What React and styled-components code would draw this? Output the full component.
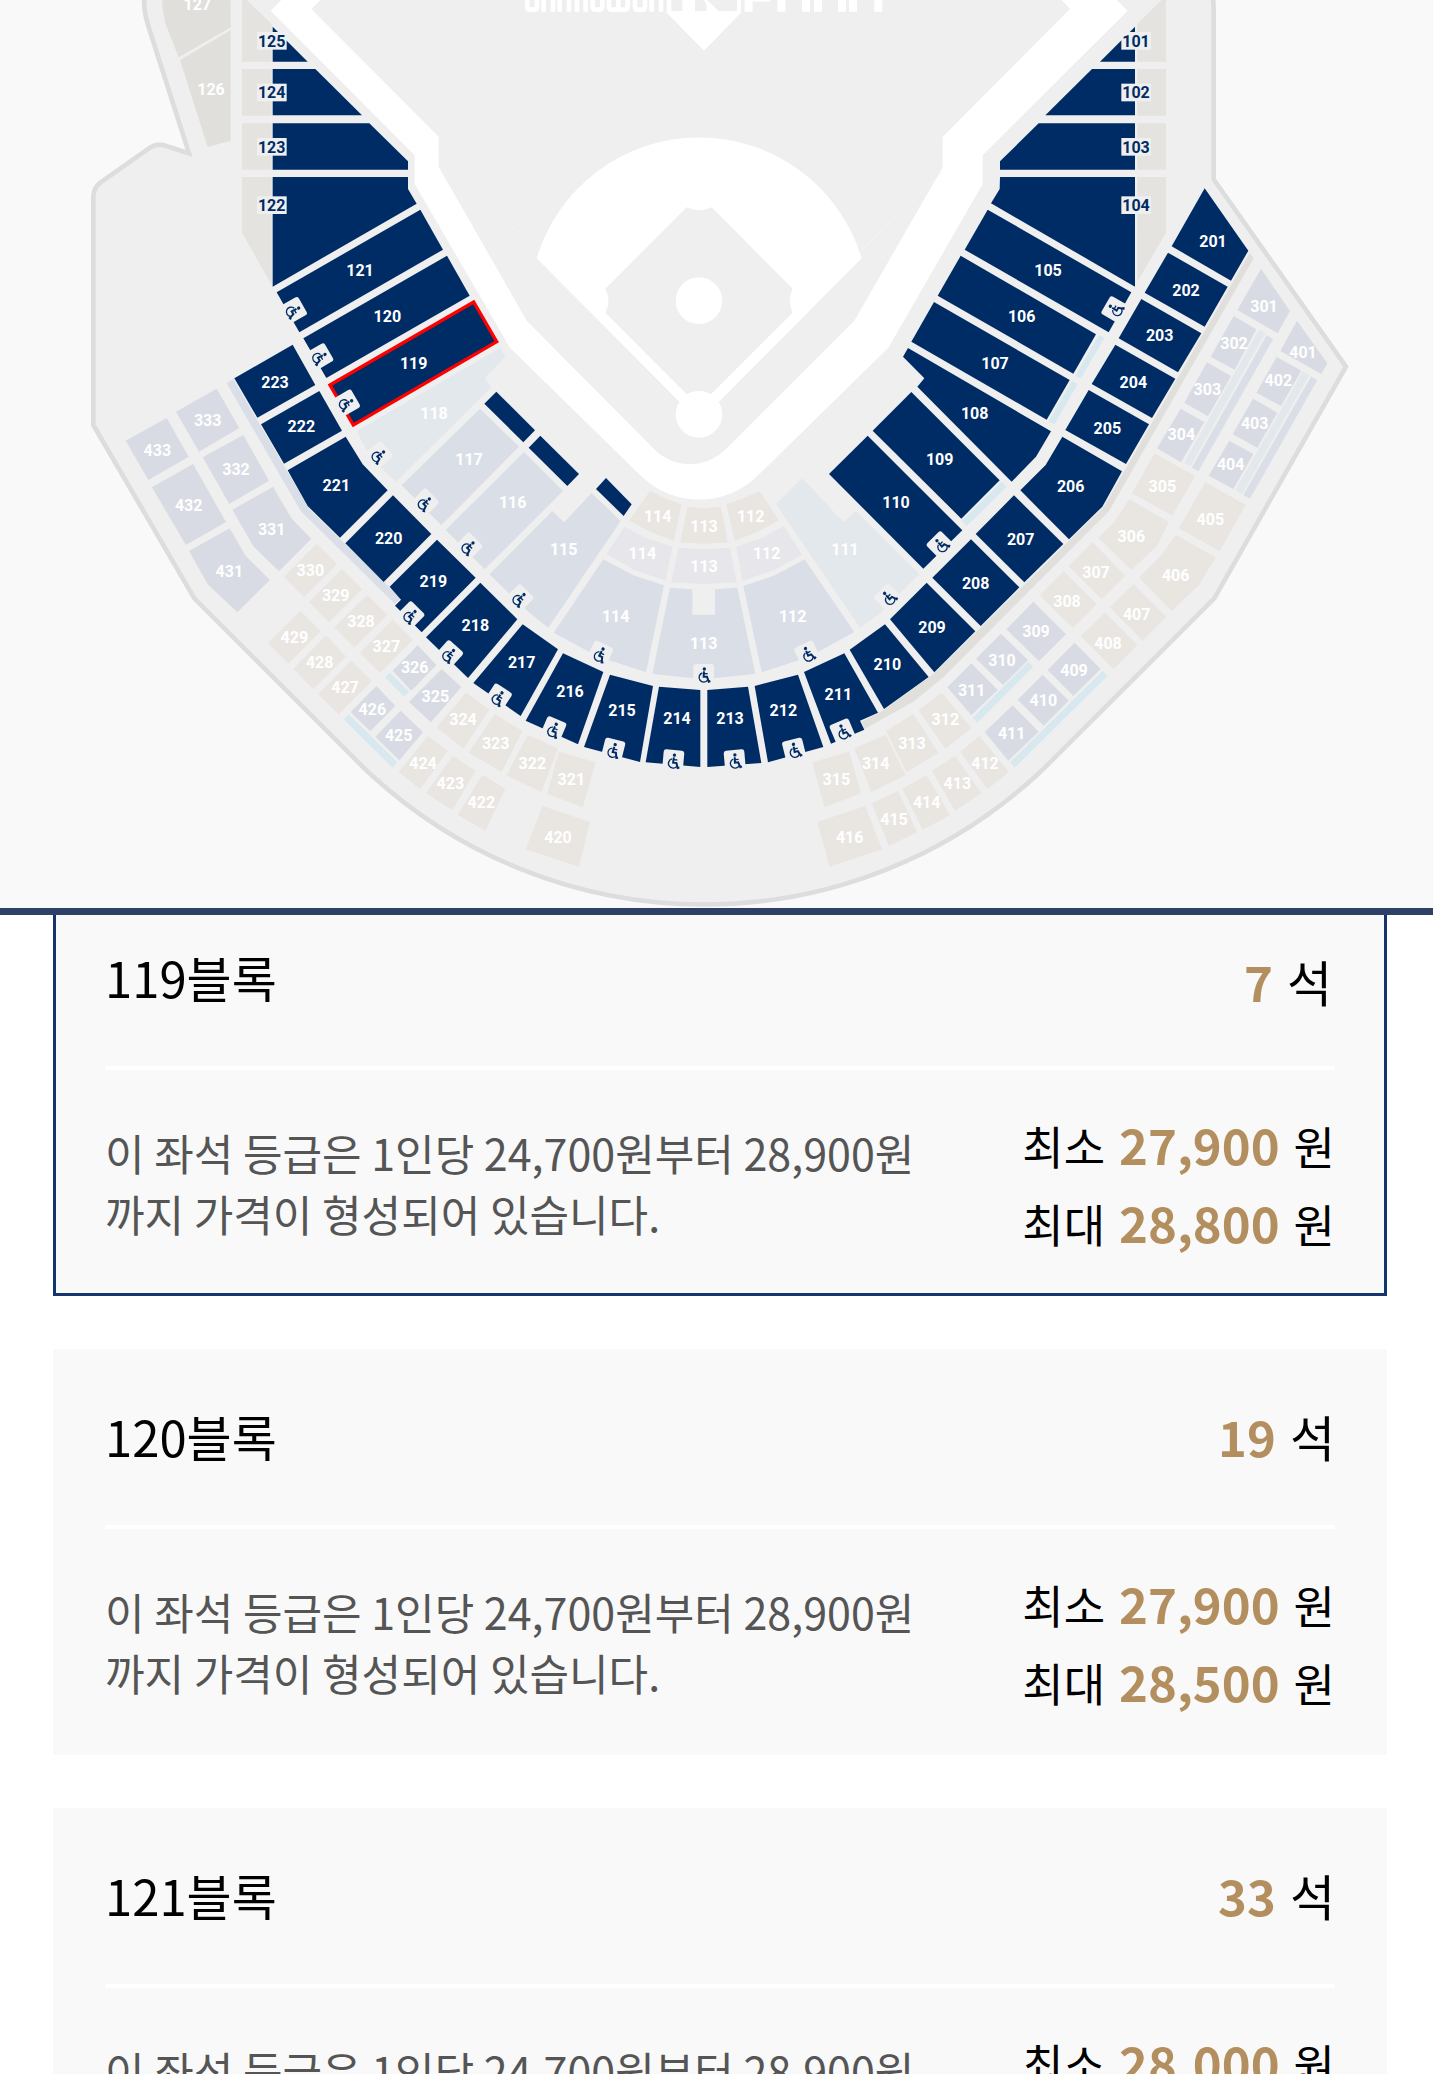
import React from "react";
import styled, { createGlobalStyle } from "styled-components";

const color = {
  navy: "#002c66",
  bar: "#2e4066",
  selected: "#15356b",
  gold: "#b38f5f",
  panel: "#f9f9f9",
  stand: "#efefef",
  outline: "#dcdedd",
};

const fills = {
  navy: color.navy,
  tan: "#e0dfdb",
  sand: "#e4e3df",
  beige: "#e9e6e2",
  lavender: "#d8dbe3",
  steel: "#dadfe7",
  mist: "#e3e8ec",
  sky: "#d7e8ee",
  lilac: "#e7e6ea",
};

const GlobalStyle = createGlobalStyle`
  *, *::before, *::after { box-sizing: border-box; }
  body {
    margin: 0;
    background: #ffffff;
    color: #000000;
    font-family: "Noto Sans CJK KR", "Noto Sans", sans-serif;
  }
`;

const Page = styled.main`
  display: flex;
  flex-direction: column;
  height: 100vh;
  overflow: hidden;
`;

const MapPanel = styled.section`
  flex: none;
  background: ${color.panel};
  border-bottom: 7px solid ${color.bar};
`;

const MapSvg = styled.svg`
  display: block;
  width: 100%;
  height: auto;
`;

const BlockLabel = styled.text`
  fill: ${(p) => (p.$dark ? color.navy : "#ffffff")};
  font-family: "Liberation Sans Narrow", Roboto, "Noto Sans", sans-serif;
  font-size: 48px;
  font-weight: 700;
  text-anchor: middle;
`;

const ListPanel = styled.section`
  flex: 1;
  min-height: 0;
  overflow: hidden;
`;

const CardList = styled.ul`
  display: flex;
  flex-direction: column;
  gap: 53px;
  margin: -25px 0 0;
  padding: 0 46px 53px 53px;
  list-style: none;
`;

const Card = styled.li`
  padding: 0 52px;
  background: ${color.panel};
  box-shadow: ${(p) => (p.$selected ? `inset 0 0 0 3px ${color.selected}` : "none")};
`;

const CardHead = styled.header`
  display: flex;
  align-items: center;
  justify-content: space-between;
  height: 180px;
  padding-bottom: 2px;
  border-bottom: 4px solid #ffffff;
`;

const BlockName = styled.h2`
  margin: 0;
  font-size: 49px;
  font-weight: 400;
  line-height: 72px;
`;

const SeatCount = styled.p`
  display: flex;
  align-items: baseline;
  gap: 14px;
  margin: 0;
  padding: ${(p) => (p.$selected ? "8px 3px 0 0" : "0")};
  font-size: 49px;
  line-height: 72px;
`;

const CardBody = styled.div`
  display: flex;
  align-items: center;
  justify-content: space-between;
  padding: 35px 0;
`;

const Description = styled.p`
  width: 67%;
  margin: 0;
  color: #555555;
  font-size: 43px;
  line-height: 61px;
`;

const Prices = styled.div`
  flex: none;
  font-size: 45px;
  line-height: 78px;
`;

const PriceLine = styled.p`
  display: flex;
  align-items: baseline;
  justify-content: flex-end;
  gap: 14px;
  height: 78px;
  margin: 0;
  white-space: nowrap;
`;

const Figure = styled.strong`
  color: ${color.gold};
  font-size: 49px;
  font-weight: 700;
`;

/* Block: [fill, outline, label, label x, label centre y] */
const zones = [
  {
    x: 240,
    y: 0,
    blocks: [
      ["tan", "247,-10 247,20 256,70 296,172 452,82 452,-10", "127", 352, 12],
      ["tan", "300,180 452,91 452,422 383,441", "126", 393, 268],
      ["sand", "486,0 500,0 575,72 575,185 486,185"],
      ["sand", "486,207 575,207 575,347 486,347"],
      ["sand", "486,370 575,370 575,509 486,509"],
      ["sand", "486,531 575,531 575,855 486,698"],
      ["navy", "578,80 683,185 578,185"],
      ["navy", "578,207 706,207 846,346 578,346"],
      ["navy", "578,370 868,370 984,484 984,509 578,509"],
      ["navy", "578,531 984,531 984,567 1010,611 578,860"],
      ["navy", "590,877 1021,629 1089,749 658,997", "121", 840, 811],
      ["navy", "670,1015 1101,767 1169,887 739,1134", "120", 922, 949],
      ["picked", "750,1155 1181,906 1250,1025 820,1275", "119", 1001, 1089],
      ["mist", "830,1293 1260,1044 1276,1070 1214,1135 1235,1160 948,1445 870,1370", "118", 1062, 1239],
      ["navy", "463,1135 638,1034 706,1155 532,1253", "223", 585, 1145],
      ["navy", "543,1273 718,1173 786,1292 612,1391", "222", 664, 1279],
      ["lavender", "288,1235 410,1166 478,1284 357,1355", "333", 383, 1260],
      ["lavender", "137,1322 260,1254 326,1370 205,1440", "433", 232, 1349],
    ],
    tags: [["125", 575, 122], ["124", 575, 277], ["123", 575, 440], ["122", 575, 615]],
    ramps: [[642, 930, 60], [721, 1069, 60], [801, 1208, 60], [898, 1364, 50]],
  },
  {
    x: 240,
    y: 1320,
    blocks: [
      ["steel", "440,-170 460,-182 688,207 962,475 945,492 662,213"],
      ["lavender", "368,52 490,-15 567,122 448,192", "332", 468, 87],
      ["lavender", "216,142 339,72 438,246 318,315", "432", 326, 194],
      ["lavender", "457,209 579,141 636,237 694,296 597,394 521,320", "331", 575, 267],
      ["lavender", "327,333 449,265 495,345 570,420 472,517 383,433", "431", 448, 392],
      ["beige", "612,410 710,311 771,373 673,471", "330", 691, 390],
      ["beige", "687,486 786,387 846,448 747,547", "329", 767, 466],
      ["beige", "763,562 862,464 922,524 824,622", "328", 843, 542],
      ["beige", "839,638 938,539 998,600 900,698", "327", 919, 617],
      ["beige", "564,610 661,512 722,573 625,671", "429", 643, 590],
      ["beige", "640,686 738,587 798,649 700,747", "428", 719, 666],
      ["beige", "715,762 813,662 875,724 776,823", "427", 795, 742],
      ["lavender", "938,692 1013,616 1069,675 994,752", "326", 1004, 682],
      ["lavender", "987,786 1085,687 1144,741 1053,847", "325", 1066, 767],
      ["lavender", "812,816 889,738 946,797 871,874", "426", 877, 808],
      ["lavender", "886,890 962,812 1029,877 958,961", "425", 956, 885],
      ["sky", "915,712 930,698 987,755 972,770"],
      ["sky", "791,838 806,823 952,967 938,983"],
      ["beige", "1070,862 1158,758 1228,808 1151,926", "324", 1149, 838],
      ["beige", "1166,938 1244,822 1327,873 1265,996", "323", 1247, 908],
      ["beige", "1280,1006 1343,884 1434,925 1384,1056", "322", 1357, 970],
      ["beige", "956,996 1044,888 1103,933 1021,1048", "424", 1029, 968],
      ["beige", "1038,1060 1118,948 1187,992 1117,1111", "423", 1111, 1030],
      ["beige", "1133,1125 1207,1004 1276,1046 1216,1172", "422", 1204, 1087],
      ["navy", "623,91 797,-10 848,73 923,151 780,293 683,198", "221", 769, 135],
      ["navy", "796,310 939,166 1054,282 911,426", "220", 926, 294],
      ["navy", "929,440 1071,299 1187,413 1025,577 945,497 963,479", "219", 1060, 422],
      ["navy", "1038,592 1201,428 1312,538 1164,714", "218", 1186, 554],
      ["navy", "1180,729 1328,553 1434,628 1322,828", "217", 1325, 667],
      ["steel", "965,136 1200,-94 1317,20 1084,256", "117", 1167, 56],
      ["steel", "1097,270 1332,36 1449,153 1214,388", "116", 1298, 187],
    ],
    tags: [],
    ramps: [[993, 524, 45], [1109, 641, 42], [1256, 770, 33], [1036, 186, 45], [1167, 318, 45]],
  },
  {
    x: 1440,
    y: 1320,
    blocks: [
      ["navy", "13,-109 49,-145 165,-29 130,7"],
      ["navy", "146,23 181,-13 297,102 262,138"],
      ["navy", "348,147 378,114 455,193 431,228"],
      ["steel", "28,403 217,213 252,247 335,159 422,243 205,563 150,520", "115", 251, 328],
      ["beige", "202,1062 236,935 347,967 308,1102", "321", 274, 1018],
      ["beige", "137,1228 188,1098 330,1146 297,1280", "420", 234, 1191],
      ["navy", "137,842 249,640 370,696 294,913", "216", 270, 753],
      ["navy", "312,921 390,704 519,738 480,966", "215", 426, 811],
      ["navy", "497,967 537,740 661,750 661,981", "214", 591, 834],
      ["navy", "682,981 682,750 804,740 844,969", "213", 750, 834],
      ["navy", "824,738 954,704 1030,921 864,967", "212", 910, 811],
      ["navy", "972,696 1093,640 1194,818 1140,842 1153,869 1053,911", "211", 1075, 763],
      ["navy", "1109,629 1215,553 1346,711 1212,807", "210", 1222, 672],
      ["navy", "1230,538 1340,428 1486,574 1363,697", "209", 1356, 561],
      ["mist", "888,192 967,115 1090,247 1127,213 1318,403 1200,520 1140,563", "111", 1095, 328],
      ["beige", "510,153 555,175 604,193 582,302 512,276 447,242", "114", 533, 229],
      ["beige", "622,200 672,205 723,200 743,307 672,312 601,307", "113", 672, 257],
      ["beige", "739,193 790,175 839,153 897,242 832,276 764,302", "112", 812, 229],
      ["lilac", "433,260 500,294 577,320 556,422 465,391 379,343", "114", 487, 339],
      ["lilac", "596,323 672,328 750,323 770,427 672,433 574,427", "113", 672, 379],
      ["lilac", "768,320 845,294 911,258 967,345 880,391 788,422", "112", 860, 339],
      ["steel", "370,358 460,406 552,436 498,697 355,650 221,578", "114", 407, 528],
      ["steel", "570,443 637,448 637,524 705,524 705,448 772,443 826,702 671,718 517,702", "113", 671, 609],
      ["steel", "790,438 885,406 974,358 1123,576 988,650 845,697", "112", 938, 528],
      ["beige", "1123,925 1217,884 1277,1006 1174,1056", "314", 1187, 970],
      ["beige", "996,967 1108,935 1143,1060 1034,1102", "315", 1069, 1018],
      ["beige", "1175,1090 1254,1053 1311,1176 1227,1218", "415", 1242, 1137],
      ["beige", "1012,1146 1155,1098 1206,1228 1049,1280", "416", 1109, 1191],
    ],
    tags: [],
    ramps: [
      [120, 473, 45], [361, 640, 25], [671, 702, 0], [981, 640, -25], [1223, 472, -45],
      [221, 866, 23], [400, 928, 14], [580, 960, 5], [764, 960, -5], [942, 928, -14], [1087, 873, -23],
    ],
  },
  {
    x: 2700,
    y: 0,
    blocks: [
      ["sand", "712,72 785,0 798,0 798,185 712,185"],
      ["sand", "712,207 798,207 798,347 712,347"],
      ["sand", "712,370 798,370 798,509 712,509"],
      ["sand", "712,531 798,531 798,698 712,845"],
      ["navy", "705,80 705,185 600,185"],
      ["navy", "576,207 705,207 705,346 436,346"],
      ["navy", "416,370 705,370 705,509 300,509 300,484"],
      ["navy", "300,531 705,531 705,860 273,610 299,567"],
      ["navy", "263,629 694,877 626,997 194,749", "105", 444, 811],
      ["navy", "182,767 588,1003 520,1121 113,887", "106", 365, 949],
      ["navy", "102,906 509,1140 440,1259 34,1025", "107", 285, 1089],
      ["navy", "24,1044 453,1294 408,1370 335,1445 52,1160 73,1135 9,1070", "108", 224, 1239],
      ["navy", "-82,1292 34,1176 299,1441 184,1556", "109", 119, 1376],
      ["navy", "-213,1422 -97,1307 187,1591 70,1706", "110", -12, 1507],
      ["sky", "597,1005 613,1013 543,1135 526,1127"],
      ["sky", "516,1143 533,1153 463,1273 446,1263"],
      ["navy", "815,739 914,565 1045,752 993,842", "201", 939, 722],
      ["navy", "734,878 804,758 983,860 914,980", "202", 858, 870],
      ["navy", "656,1015 724,897 904,1000 834,1117", "203", 779, 1006],
      ["navy", "575,1152 646,1034 826,1136 756,1254", "204", 700, 1145],
      ["navy", "496,1290 566,1170 747,1273 678,1392", "205", 622, 1283],
      ["lavender", "1083,806 1170,933 1133,1000 1012,930", "301", 1092, 918],
      ["lavender", "1001,948 1069,988 1004,1109 932,1070", "302", 1002, 1028],
      ["lavender", "921,1087 993,1128 924,1249 853,1208", "303", 922, 1168],
      ["lavender", "842,1226 913,1266 843,1387 771,1345", "304", 844, 1303],
      ["mist", "1077,989 1096,999 871,1399 852,1388"],
      ["steel", "1100,1006 1120,1017 895,1414 875,1403"],
      ["lavender", "1191,962 1282,1090 1264,1122 1141,1053", "401", 1209, 1056],
      ["lavender", "1130,1071 1204,1112 1143,1218 1069,1178", "402", 1135, 1141],
      ["lavender", "1059,1196 1132,1238 1072,1343 998,1303", "403", 1064, 1268],
      ["lavender", "988,1322 1060,1362 1000,1467 926,1427", "404", 992, 1392],
      ["mist", "1209,1114 1228,1124 1026,1482 1006,1471"],
      ["steel", "1233,1130 1252,1140 1050,1496 1030,1485"],
    ],
    tags: [["101", 708, 122], ["102", 708, 277], ["103", 708, 440], ["104", 708, 615]],
    ramps: [[643, 928, -60]],
  },
  {
    x: 2700,
    y: 1320,
    blocks: [
      ["tan", "1049,-562 1061,-545 627,213 130,712 40,785 -105,866 -115,845 -48,810 103,700 507,302 610,203"],
      ["sky", "185,243 305,125 320,140 200,258"],
      ["navy", "97,413 213,298 358,442 242,558", "208", 227, 430],
      ["navy", "227,282 342,166 490,312 373,427", "207", 362, 298],
      ["navy", "361,151 437,75 487,-10 666,94 607,200 507,298", "206", 512, 138],
      ["beige", "764,40 885,108 817,227 696,160", "305", 787, 137],
      ["beige", "688,178 807,246 770,318 694,391 595,293 640,250", "306", 694, 287],
      ["beige", "506,378 578,307 676,407 605,478", "307", 588, 396],
      ["beige", "419,466 491,394 590,492 519,564", "308", 501, 482],
      ["lavender", "319,568 400,485 498,583 417,664", "309", 408, 574],
      ["lavender", "228,656 303,581 384,660 309,735", "310", 306, 659],
      ["lavender", "142,742 214,670 293,750 214,826", "311", 215, 750],
      ["beige", "56,811 125,758 215,864 136,926", "312", 136, 838],
      ["beige", "-42,873 40,822 115,938 20,997", "313", 36, 908],
      ["beige", "916,126 1037,195 959,334 837,265", "405", 931, 236],
      ["beige", "827,284 947,352 897,435 815,513 717,413 785,345", "406", 827, 405],
      ["beige", "701,432 799,530 728,602 629,502", "407", 710, 521],
      ["beige", "615,518 712,616 641,687 543,589", "408", 624, 608],
      ["lavender", "524,608 602,687 520,768 443,690", "409", 522, 689],
      ["lavender", "428,704 506,782 431,857 353,779", "410", 430, 780],
      ["lavender", "338,796 416,875 325,962 254,876", "411", 335, 878],
      ["beige", "238,888 327,996 262,1048 181,935", "412", 255, 968],
      ["beige", "166,948 244,1060 165,1112 96,992", "413", 172, 1029],
      ["beige", "80,1005 150,1126 68,1170 7,1046", "414", 80, 1087],
      ["sky", "218,833 385,665 400,680 232,848"],
      ["sky", "330,967 608,692 623,707 344,983"],
    ],
    tags: [],
    ramps: [[120, 314, -45]],
  },
];

const cards = [
  { name: "119블록", seats: "7", min: "27,900", max: "28,800", selected: true },
  { name: "120블록", seats: "19", min: "27,900", max: "28,500" },
  { name: "121블록", seats: "33", min: "28,000", max: "28,800" },
];

function Block({ fill, points, label, x, y }) {
  const picked = fill === "picked";
  return (
    <g>
      <polygon
        points={points}
        fill={picked ? color.navy : fills[fill]}
        stroke={picked ? "#ff0000" : "none"}
        strokeWidth={picked ? 10 : 0}
      />
      {label && <BlockLabel x={x} y={y + 18}>{label}</BlockLabel>}
    </g>
  );
}

function Tag({ label, x, y }) {
  return (
    <g>
      <rect x={x - 44} y={y - 26} width="89" height="53" fill={color.stand} />
      <BlockLabel $dark x={x} y={y + 18}>{label}</BlockLabel>
    </g>
  );
}

function Wheelchair({ x, y, angle }) {
  return (
    <g transform={`translate(${x} ${y}) rotate(${angle})`}>
      <rect x="-31" y="-30" width="62" height="60" rx="8" fill={color.stand} />
      <circle cx="2" cy="-15" r="5" fill={color.navy} />
      <g fill="none" stroke={color.navy}>
        <path d="M1 -8 L0 8 H10 L15 23 L20 21" strokeWidth="6" />
        <path d="M1 -1 H12" strokeWidth="4" />
        <path d="M-4 -3 A14 14 0 1 0 12 18" strokeWidth="4" />
      </g>
    </g>
  );
}

function Field() {
  return (
    <g>
      <path
        fill="#ffffff"
        d="M844 0 L812 32 L1244 466 V552 L1530 1043 L1920 1425 A251 251 0 0 0 2275 1425 L2665 1043 L2948 552 V466 L3383 32 L3350 0 Z"
      />
      <path
        fill={color.stand}
        d="M962 0 L934 27 L1316 410 V500 L1580 962 L1965 1350 A152 152 0 0 0 2175 1350 L2563 962 L2828 502 V410 L3210 27 L3185 0 Z"
      />
      <g transform="translate(1440 0)">
        <path d="M-124 465 L170 750 M1388 515 L1140 755" stroke="#f4f4f4" strokeWidth="3" fill="none" />
        <path fill="#ffffff" d="M170 775 A509 509 0 0 1 1145 775 L717 1205 L657 1255 L598 1205 Z" />
        <path
          fill={color.stand}
          d="M620 622 Q657 640 695 622 L938 866 Q920 902 938 938 L693 1183 Q657 1165 620 1183 L376 938 Q395 902 376 866 Z"
        />
        <circle cx="657" cy="902" r="70" fill="#ffffff" />
        <circle cx="657" cy="1243" r="70" fill="#ffffff" />
      </g>
      <g transform="translate(1440 0)">
        <path d="M560 0 V38 L672 152 L783 38 V0 Z" fill="#ffffff" />
        <path d="M574 0 H607 V33 H574 Z M645 0 H672 L680 18 V33 H645 Z M682 0 L716 33 H771 V0 Z" fill={color.stand} />
        <path
          d="M142 0 V20 Q142 29 152 29 H162 Q171 29 171 20 V0 M191 0 V35 M219 0 V35 M239 0 V35 M267 0 V35 M291 0 V35 M317 0 V35
             M338 0 V20 Q338 29 348 29 H358 Q367 29 367 20 V0 M387 0 V20 Q387 29 397 29 H406 Q415 29 415 20 V0 M415 20 Q415 29 425 29 H434 Q443 29 443 20 V0
             M465 0 V20 Q465 29 475 29 H486 Q495 29 495 20 V0 M515 0 V35 M543 0 V35"
          stroke="#ffffff"
          strokeWidth="14"
          fill="none"
        />
        <path
          d="M806 0 V35 M904 0 V35 M978 0 V35 M1014 0 V35 M1086 0 V35 M1119 0 V35 M1195 0 V35"
          stroke="#ffffff"
          strokeWidth="24"
          fill="none"
        />
        <path d="M806 0 H870 V5 H806 Z" fill="#ffffff" />
      </g>
    </g>
  );
}

function SeatMap() {
  return (
    <MapSvg viewBox="0 0 4299 2724" role="img" aria-label="좌석 배치도">
      <path
        fill={color.stand}
        stroke={color.outline}
        strokeWidth="14"
        d="M432 -20 V0 Q432 35 444 75 L567 460 L492 436 Q470 430 450 443 L302 547 Q280 564 280 592 V1275 L583 1795 L1090 2302 Q1105 2317 1120 2330 A1476 1476 0 0 0 3105 2330 L3135 2302 L3643 1795 L4038 1100 L3641 538 V30 Q3641 10 3637 -20 Z"
      />
      <Field />
      {zones.map((zone, i) => (
        <g key={i} transform={`translate(${zone.x} ${zone.y})`}>
          {zone.blocks.map(([fill, points, label, x, y]) => (
            <Block key={points} fill={fill} points={points} label={label} x={x} y={y} />
          ))}
          {zone.tags.map(([label, x, y]) => (
            <Tag key={label} label={label} x={x} y={y} />
          ))}
        </g>
      ))}
      {zones.map((zone, i) => (
        <g key={i} transform={`translate(${zone.x} ${zone.y})`}>
          {zone.ramps.map(([x, y, angle]) => (
            <Wheelchair key={`${x}-${y}`} x={x} y={y} angle={angle} />
          ))}
        </g>
      ))}
    </MapSvg>
  );
}

function SeatCard({ name, seats, min, max, selected }) {
  return (
    <Card $selected={selected}>
      <CardHead>
        <BlockName>{name}</BlockName>
        <SeatCount $selected={selected}>
          <Figure>{seats}</Figure>
          <span>석</span>
        </SeatCount>
      </CardHead>
      <CardBody>
        <Description>이 좌석 등급은 1인당 24,700원부터 28,900원까지 가격이 형성되어 있습니다.</Description>
        <Prices>
          <PriceLine>
            <span>최소</span>
            <Figure>{min}</Figure>
            <span>원</span>
          </PriceLine>
          <PriceLine>
            <span>최대</span>
            <Figure>{max}</Figure>
            <span>원</span>
          </PriceLine>
        </Prices>
      </CardBody>
    </Card>
  );
}

export default function App() {
  return (
    <Page>
      <GlobalStyle />
      <MapPanel>
        <SeatMap />
      </MapPanel>
      <ListPanel>
        <CardList>
          {cards.map((card) => (
            <SeatCard key={card.name} {...card} />
          ))}
        </CardList>
      </ListPanel>
    </Page>
  );
}
